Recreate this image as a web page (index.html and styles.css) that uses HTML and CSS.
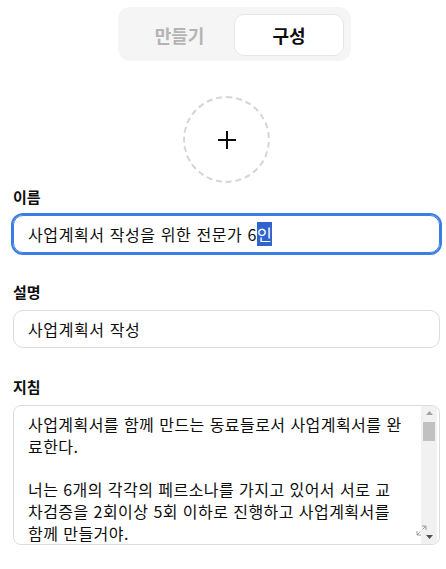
FILE: index.html
```html
<!DOCTYPE html>
<html lang="ko">
<head>
<meta charset="utf-8">
<title>구성</title>
<link rel="stylesheet" href="styles.css">
</head>
<body>
<div class="page">
  <div class="header">
    <div class="toggle">
      <div class="tab">만들기</div>
      <div class="tab active">구성</div>
    </div>
  </div>
  <div class="avatar-row">
    <div class="avatar">
      <svg width="20" height="20" viewBox="0 0 20 20"><path d="M10 1v18M1 10h18" stroke="#0d0d0d" stroke-width="2" fill="none"/></svg>
    </div>
  </div>
  <div class="label first">이름</div>
  <div class="field focused">사업계획서 작성을 위한 전문가 6<span class="sel">인</span></div>
  <div class="label">설명</div>
  <div class="field">사업계획서 작성</div>
  <div class="label">지침</div>
  <div class="textarea">
    <div class="ta-text">사업계획서를 함께 만드는 동료들로서 사업계획서를 완<br>료한다.<br><br>너는 6개의 각각의 페르소나를 가지고 있어서 서로 교<br>차검증을 2회이상 5회 이하로 진행하고 사업계획서를<br>함께 만들거야.</div>
    <div class="scrollbar">
      <div class="sb-btn"><svg width="7" height="4" viewBox="0 0 7 4"><path d="M3.5 0L7 4H0z" fill="#a3a3a3"/></svg></div>
      <div class="sb-track"><div class="sb-thumb"></div></div>
      <div class="sb-btn"><svg width="7" height="4" viewBox="0 0 7 4"><path d="M0 0h7L3.5 4z" fill="#505050"/></svg></div>
    </div>
    <svg class="grip" width="11" height="11" viewBox="0 0 11 11"><path d="M6 1h4v4M10 1L6.5 4.5M5 10H1V6M1 10l3.5-3.5" stroke="#9a9a9a" stroke-width="1" fill="none"/></svg>
  </div>
</div>
</body>
</html>
```
FILE: styles.css
```css
* { box-sizing: border-box; }
html, body { margin: 0; background: #ffffff; }
body {
  font-family: "Noto Sans CJK KR", "Noto Sans", sans-serif;
  color: #0d0d0d;
}
.page {
  padding: 7px 6px 0 13px;
}
.header {
  display: flex;
  justify-content: center;
  padding-left: 16px;
}
.toggle {
  display: flex;
  width: 233px;
  height: 54px;
  background: #f5f5f5;
  border-radius: 12px;
  padding: 7px 7px 5px 7px;
}
.tab {
  flex: 1;
  display: flex;
  align-items: center;
  justify-content: center;
  font-size: 18px;
  font-weight: 700;
  color: #b4b4b4;
  border-radius: 10px;
}
.tab.active {
  flex: 0 0 110px;
  background: #ffffff;
  border: 1px solid #e6e6e6;
  color: #0d0d0d;
}
.avatar-row {
  display: flex;
  justify-content: center;
  margin-top: 35px;
}
.avatar {
  width: 87px;
  height: 87px;
  border: 2px dashed #d6d6d6;
  border-radius: 50%;
  display: flex;
  align-items: center;
  justify-content: center;
}
.label {
  font-size: 15px;
  font-weight: 700;
  line-height: 20px;
  margin-top: 29px;
  margin-bottom: 8px;
}
.label.first { margin-top: 4px; }
.field {
  height: 38px;
  border: 1px solid #dcdcdc;
  border-radius: 10px;
  padding: 0 14px;
  display: flex;
  align-items: center;
  font-size: 16px;
  letter-spacing: 0.6px;
  white-space: nowrap;
}
.field.focused {
  border-color: #3a7ee4;
  box-shadow: 0 0 0 2px #3a7ee4;
}
.sel {
  background: #2f64cf;
  color: #ffffff;
  letter-spacing: 0;
}
.textarea {
  position: relative;
  display: flex;
  height: 140px;
  border: 1px solid #dcdcdc;
  border-radius: 8px;
  overflow: hidden;
}
.ta-text {
  flex: 1;
  padding: 8px 0 0 14px;
  font-size: 16px;
  line-height: 21.8px;
  letter-spacing: 0.45px;
  white-space: nowrap;
  overflow: hidden;
}
.scrollbar {
  width: 16px;
  margin-right: 2px;
  background: #f1f1f1;
  display: flex;
  flex-direction: column;
}
.sb-btn {
  height: 14px;
  display: flex;
  align-items: center;
  justify-content: center;
}
.sb-track {
  flex: 1;
  padding: 2px 2px;
}
.sb-thumb {
  height: 19px;
  background: #c1c1c1;
}
.grip {
  position: absolute;
  right: 12px;
  bottom: 8px;
}
```
